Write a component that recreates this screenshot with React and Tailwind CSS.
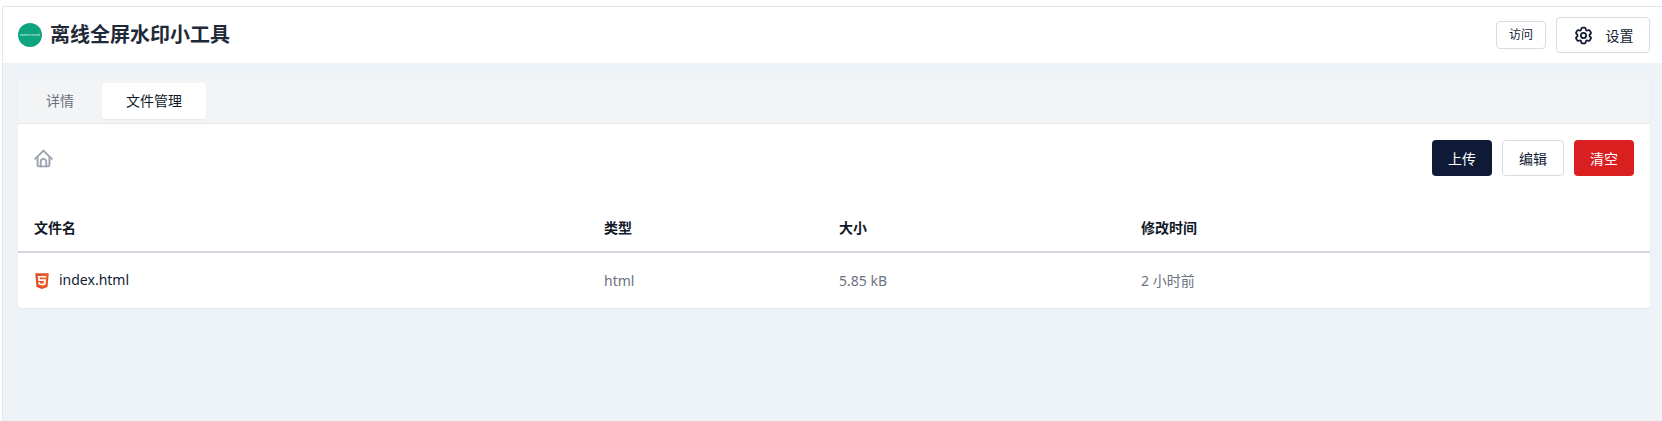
import React from "react";
import { HiOutlineCog6Tooth } from "react-icons/hi2";

function Html5() {
  return (
    <svg width="16" height="18" viewBox="0 0 384 512">
      <path fill="#e44d26" d="M0 32l34.900 395.800L191.500 480l157.600-52.200L384 32H0z" />
      <path fill="#f16529" d="M192 68v374l127-42 30-332z" />
      <path fill="#fff" d="M308.200 159.900H124.400l4.100 49.400h175.600l-13.600 148.400-97.900 27v.3h-1.100l-98.700-27.300-6-75.800h47.700L138 320l53.500 14.500 53.700-14.500 6-62.200H84.300L71.500 112.200h241.100l-4.400 47.700z" />
    </svg>
  );
}

function Home() {
  return (
    <svg width="19" height="19" viewBox="0 0 24 24" fill="none" stroke="#9ca3af" strokeWidth="2.400" strokeLinecap="round" strokeLinejoin="round">
      <path d="M1.500 12.500L12 2 22.500 12.500" />
      <path d="M4.500 10v10a2 2 0 0 0 2 2h11a2 2 0 0 0 2-2V10" />
      <path d="M8.500 22v-6a3.500 3.500 0 0 1 7 0v6" />
    </svg>
  );
}

export default function App() {
  return (
    <div className="h-[421px] w-[1662px] overflow-hidden bg-white pt-[6px] pl-[2px] text-[#111827] [font-family:'Noto_Sans','Noto_Sans_CJK_SC',sans-serif]">
      <div className="flex h-[415px] flex-col border-t border-l border-[#e5e7eb] bg-[#eef3f8]">
        <header className="flex h-[56px] items-center justify-between bg-white pr-[12px] pl-[15px]">
          <div className="flex items-center gap-[8px]">
            <div className="flex h-[24px] w-[24px] items-center justify-center rounded-full bg-[#0ea47f]">
              <span className="text-[4px] leading-none text-white/80">watermark</span>
            </div>
            <h1 className="text-[20px] leading-[28px] font-bold text-[#1f2937]">离线全屏水印小工具</h1>
          </div>
          <div className="flex items-center gap-[10px]">
            <button className="h-[28px] w-[50px] rounded-[4px] border border-[#d9dbe0] bg-white text-[12px] text-[#111b33]">访问</button>
            <button className="flex h-[36px] w-[94px] items-center justify-center gap-[12px] rounded-[4px] border border-[#d9dbe0] bg-white text-[14px] text-[#111b33]">
              <HiOutlineCog6Tooth size={21} color="#111b33" strokeWidth={2} />
              <span>设置</span>
            </button>
          </div>
        </header>
        <main className="pt-[16px] pr-[12px] pl-[15px]">
          <div className="overflow-hidden rounded-[4px] bg-white shadow-[0_1px_2px_rgba(0,0,0,0.06)]">
            <div className="flex h-[45px] items-center gap-[4px] border-b border-[#e5e7eb] bg-[#f3f4f6] pb-[1px] pl-[4px]">
              <div className="flex h-[36px] w-[76px] items-center justify-center rounded-[3px] text-[14px] text-[#6b7280]">详情</div>
              <div className="flex h-[36px] w-[104px] items-center justify-center rounded-[3px] bg-white text-[14px] text-[#111827] shadow-[0_1px_2px_rgba(0,0,0,0.05)]">文件管理</div>
            </div>
            <div className="flex h-[68px] items-center justify-between pr-[16px] pl-[16px]">
              <Home />
              <div className="flex items-center gap-[10px]">
                <button className="h-[36px] w-[60px] rounded-[4px] bg-[#0f1a36] text-[14px] text-white">上传</button>
                <button className="h-[36px] w-[62px] rounded-[4px] border border-[#d9dbe0] bg-white text-[14px] text-[#111b33]">编辑</button>
                <button className="h-[36px] w-[60px] rounded-[4px] bg-[#d91f1f] text-[14px] text-white">清空</button>
              </div>
            </div>
            <table className="w-full table-fixed border-collapse text-left text-[14px]">
              <colgroup>
                <col className="w-[570px]" />
                <col className="w-[235px]" />
                <col className="w-[302px]" />
                <col />
              </colgroup>
              <thead>
                <tr className="h-[60px] border-b-2 border-[#d6d8e0]">
                  <th className="px-[16px] pt-[12px] text-[14px] font-bold text-[#111827]">文件名</th>
                  <th className="px-[16px] pt-[12px] text-[14px] font-bold text-[#111827]">类型</th>
                  <th className="px-[16px] pt-[12px] text-[14px] font-bold text-[#111827]">大小</th>
                  <th className="px-[16px] pt-[12px] text-[14px] font-bold text-[#111827]">修改时间</th>
                </tr>
              </thead>
              <tbody>
                <tr className="h-[56px]">
                  <td className="px-[16px]">
                    <div className="flex items-center gap-[9px]">
                      <Html5 />
                      <span className="pb-[2px] text-[14px] text-[#111b33]">index.html</span>
                    </div>
                  </td>
                  <td className="px-[16px] text-[#6b7280]">html</td>
                  <td className="px-[16px] text-[#6b7280]">5.85 kB</td>
                  <td className="px-[16px] text-[#6b7280]">2 小时前</td>
                </tr>
              </tbody>
            </table>
          </div>
        </main>
      </div>
    </div>
  );
}
